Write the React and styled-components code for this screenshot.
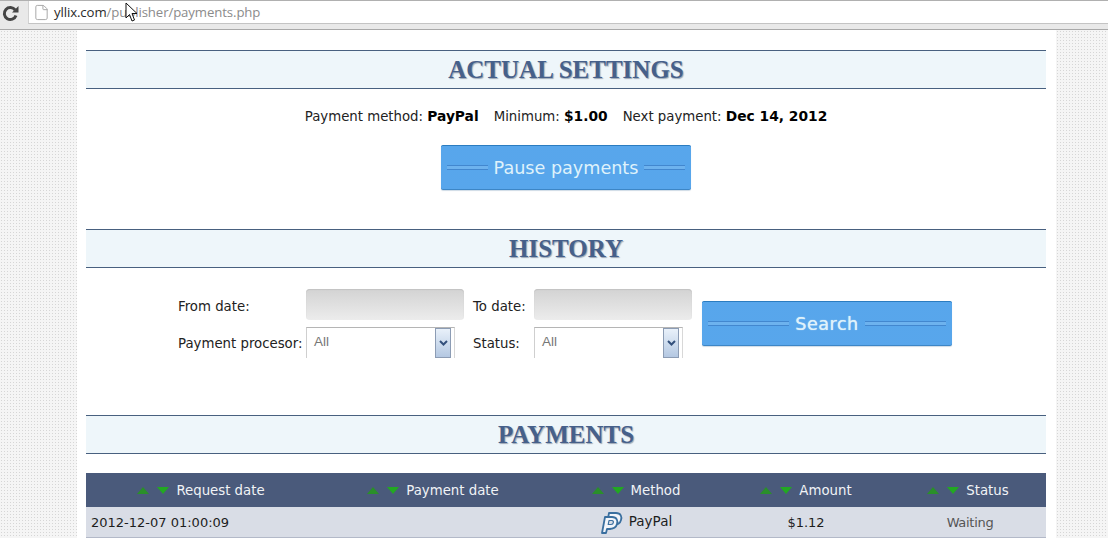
import React from 'react'
import styled, { createGlobalStyle } from 'styled-components'
import { File } from 'lucide-react'

const Global = createGlobalStyle`
html, body {
  margin: 0;
  padding: 0;
  height: 538px;
  overflow: hidden;
  background: #fff;
  font-family: "DejaVu Sans", Verdana, sans-serif;
}
`

const Chrome = styled.div`
display: flex;
align-items: flex-start;
height: 30px;
box-sizing: border-box;
background: #e9e9e9;
border-top: 1px solid #b0b0b0;
border-bottom: 1px solid #a9a9a9;
`

const Reload = styled.div`
display: flex;
width: 28px;
padding: 4px 0 0 2px;
box-sizing: border-box;
`

const Address = styled.div`
flex: 1;
display: flex;
align-items: center;
gap: 4px;
height: 23px;
padding-left: 4px;
box-sizing: border-box;
background: #fff;
border-left: 1px solid #d2d2d2;
border-bottom: 1px solid #c4c4c4;
color: #8b8b8b;
font-family: "Open Sans", sans-serif;
font-size: 13.2px;
letter-spacing: -0.1px;
`

const Host = styled.span`
color: #2a2a2a;
`

const Cursor = styled.svg`
position: absolute;
left: 125px;
top: 2px;
`

const Backdrop = styled.div`
height: 508px;
background-color: #f5f5f5;
background-image: radial-gradient(#d6d6d6 0.8px, transparent 1px);
background-size: 3px 3px;
`

const Page = styled.main`
width: 960px;
height: 508px;
margin-left: 77px;
padding: 20px 10px 0 9px;
background: #fff;
overflow: hidden;
`

const SectionHead = styled.h2`
height: 37px;
margin: ${p => p.$top || 0}px 0 0;
border-top: 1px solid #48607f;
border-bottom: 1px solid #48607f;
background: #eef6fa;
color: #46608a;
font-family: "Liberation Serif", serif;
font-size: 25px;
font-weight: bold;
line-height: 37px;
text-align: center;
text-shadow: 1px 1px 1px #9aa6b4;
`

const Info = styled.p`
display: flex;
justify-content: center;
gap: 15px;
margin: 17px 0 0;
color: #222;
font-size: 13.3px;
line-height: 20px;
`

const Strong = styled.b`
color: #000;
font-size: 13.8px;
`

const BlueButton = styled.button`
display: flex;
align-items: center;
gap: 6px;
width: 250px;
height: 44px;
padding: 0 6px;
box-sizing: border-box;
border: 0;
border-top: 1px solid #2b7cc0;
border-radius: 2px;
background-color: #4b9ce6;
background-image: radial-gradient(#58a6ec 0.7px, transparent 0.9px);
background-size: 2px 2px;
box-shadow: 0 1px 0 #3d86c6, 0 2px 1px #cfdbe6;
color: #dff2fb;
font-family: "DejaVu Sans", sans-serif;
font-size: 17.6px;
white-space: nowrap;
margin: ${p => p.$margin || 0};
&::before, &::after {
  content: "";
  flex: 1;
  height: 3px;
  border-top: 1px solid #4287cf;
  border-bottom: 1px solid #4287cf;
  background: #6db2ee;
}
`

const SearchLabel = styled.span`
letter-spacing: 0.5px;
text-shadow: 0 0 1px #dff2fb;
`

const SearchForm = styled.form`
display: grid;
grid-template-columns: 128px 158px 70px 158px 250px;
grid-template-rows: 31px 31px;
row-gap: 7px;
margin: 21px 0 0 92px;
color: #222;
font-size: 13.3px;
`

const Label = styled.label`
display: flex;
align-items: center;
padding-left: ${p => p.$left || 0}px;
padding-top: ${p => p.$down || 0}px;
white-space: nowrap;
`

const DateInput = styled.div`
border-radius: 4px;
background: linear-gradient(#d3d3d3, #ececec);
box-shadow: inset 0 1px 1px #c2c2c2;
`

const SearchCell = styled.div`
grid-column: 5;
grid-row: 1 / span 2;
padding: 12px 0 0 10px;
`

const Select = styled.div`
display: flex;
justify-content: space-between;
width: 149px;
height: 31px;
padding: 0 3px 0 7px;
box-sizing: border-box;
border-left: 1px solid #cfcfcf;
border-right: 1px solid #d8d8d8;
border-top: 1px solid #b5b5b5;
color: #777;
font-family: "Liberation Sans", sans-serif;
font-size: 13.5px;
line-height: 27px;
`

const SelectArrow = styled.span`
display: flex;
align-items: center;
justify-content: center;
width: 16px;
height: 30px;
box-sizing: border-box;
border: 1px solid #8c9cb4;
background: linear-gradient(#e9f1fa, #b4c8e2);
color: #33507c;
`

const TableHead = styled.div`
display: grid;
grid-template-columns: 230px 234px 172px 168px 156px;
height: 34px;
margin-top: 19px;
background: #4a5a7b;
color: #f1f3f6;
font-size: 13.3px;
`

const TableRow = styled.div`
display: grid;
grid-template-columns: 230px 234px 172px 168px 156px;
height: 31px;
box-sizing: border-box;
border-bottom: 1px solid #b3b9c8;
background: #d9dde6;
color: #1d1d1d;
font-size: 13px;
`

const HeadCell = styled.div`
display: flex;
align-items: center;
justify-content: center;
gap: 6px;
`

const Cell = styled.div`
display: flex;
align-items: center;
justify-content: ${p => p.$left ? 'flex-start' : 'center'};
gap: 6px;
padding-left: ${p => p.$left ? 5 : 0}px;
`

const WaitingCell = styled(Cell)`
padding-left: 4px;
color: #555;
letter-spacing: -0.3px;
`

const MethodName = styled.span`
font-size: 13.5px;
padding-bottom: 2px;
`

const Sort = () => (
  <svg width="33" height="10" viewBox="0 0 33 10">
    <path d="M0 9 L6 2 L12 9 Z" fill="#2a8f2a" />
    <path d="M20 2 H32 L26 9 Z" fill="#22a822" />
  </svg>
)

const PaypalMark = () => (
  <svg width="23" height="23" viewBox="0 0 23 23" fill="#f2f5fa" stroke="#3a6f9f" strokeWidth="1.8" strokeLinejoin="round">
    <path d="M9 2 H16 C21 2 22 6 21 9 C20 13 17 14 13 14 H11 L10 18 H6 Z" />
    <path d="M5 6 H12 C17 6 18 10 17 13 C16 17 13 18 9 18 H7 L6 22 H2 Z" />
    <path d="M9 9.5 H12 C14 9.5 14 13.5 11 13.5 H8.2 Z" fill="#d9dde6" strokeWidth="1.2" />
  </svg>
)

const Chevron = () => (
  <svg width="9" height="6" viewBox="0 0 9 6">
    <path d="M1 1 L4.5 4.5 L8 1" fill="none" stroke="currentColor" strokeWidth="2" />
  </svg>
)

const ReloadIcon = () => (
  <svg width="17" height="17" viewBox="0 0 17 17">
    <path d="M13.2 5 A6 6 0 1 0 14 10.5" fill="none" stroke="#454545" strokeWidth="3" />
    <path d="M10 7.5 H16.5 V1 Z" fill="#454545" />
  </svg>
)

const columns = ['Request date', 'Payment date', 'Method', 'Amount', 'Status']

export default function App() {
  return (
    <>
      <Global />
      <Chrome>
        <Reload><ReloadIcon /></Reload>
        <Address>
          <File size={17} color="#a8a8a8" strokeWidth={1.4} />
          <span><Host>yllix.com</Host>/publisher/payments.php</span>
        </Address>
      </Chrome>
      <Cursor width="13" height="21" viewBox="0 0 13 21">
        <path d="M1 1 V16 L4.5 12.5 L7 19 L9.5 18 L7 11.5 H12 Z" fill="#fff" stroke="#111" strokeWidth="1" />
      </Cursor>
      <Backdrop>
        <Page>
          <SectionHead>ACTUAL SETTINGS</SectionHead>
          <Info>
            <span>Payment method: <Strong>PayPal</Strong></span>
            <span>Minimum: <Strong>$1.00</Strong></span>
            <span>Next payment: <Strong>Dec 14, 2012</Strong></span>
          </Info>
          <BlueButton type="button" $margin="18px 0 0 355px">Pause payments</BlueButton>

          <SectionHead $top={40}>HISTORY</SectionHead>
          <SearchForm>
            <Label $down={4}>From date:</Label>
            <DateInput />
            <Label $left={9} $down={4}>To date:</Label>
            <DateInput />
            <SearchCell><BlueButton type="button"><SearchLabel>Search</SearchLabel></BlueButton></SearchCell>
            <Label $down={2}>Payment procesor:</Label>
            <Select>All<SelectArrow><Chevron /></SelectArrow></Select>
            <Label $left={9} $down={2}>Status:</Label>
            <Select>All<SelectArrow><Chevron /></SelectArrow></Select>
          </SearchForm>

          <SectionHead $top={57}>PAYMENTS</SectionHead>
          <TableHead>
            {columns.map(c => <HeadCell key={c}><Sort />{c}</HeadCell>)}
          </TableHead>
          <TableRow>
            <Cell $left>2012-12-07 01:00:09</Cell>
            <Cell />
            <Cell><PaypalMark /><MethodName>PayPal</MethodName></Cell>
            <Cell>$1.12</Cell>
            <WaitingCell>Waiting</WaitingCell>
          </TableRow>
        </Page>
      </Backdrop>
    </>
  )
}
